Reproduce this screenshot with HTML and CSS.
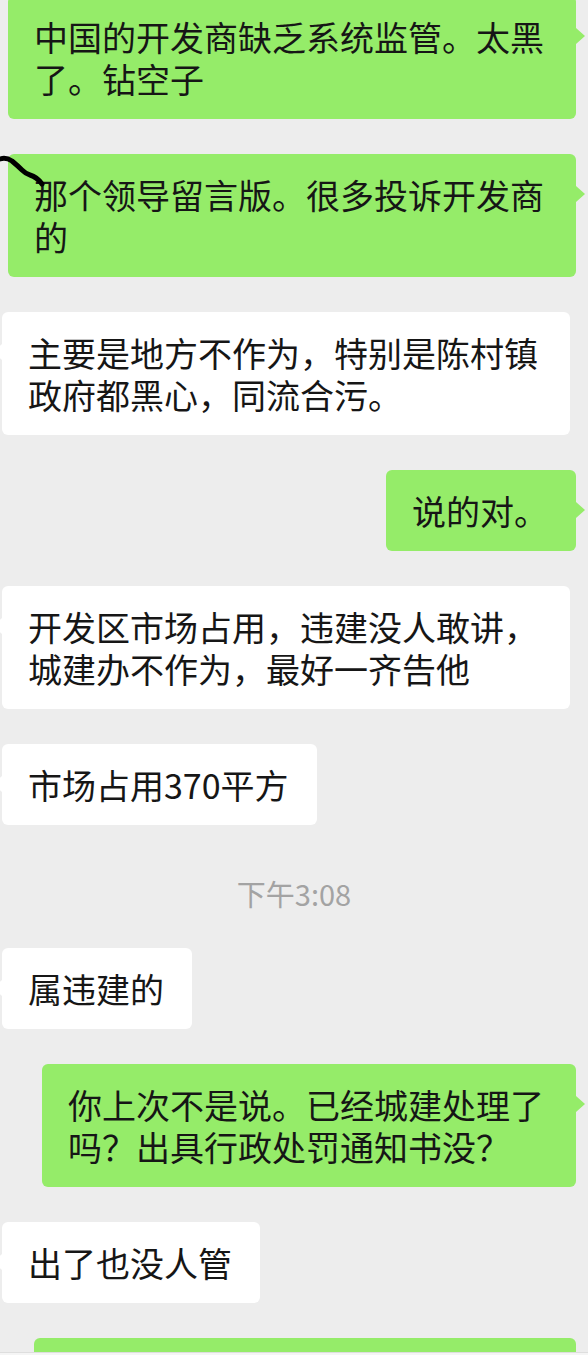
FILE: index.html
```html
<!DOCTYPE html>
<html>
<head>
    <meta charset="utf-8">
    <title>聊天记录</title>
    <link rel="stylesheet" href="styles.css">
</head>
<body>

    <div class="chat">
        <svg class="scribble" width="50" height="200" viewBox="0 0 50 200">
            <path d="M0 159 Q6 157 12 161 Q18 166 22 170 Q26 174 30 175 Q37 177 42 184" />
        </svg>

        <div class="row row-me first">
            <div class="bubble bubble-me">中国的开发商缺乏系统监管。太黑了。钻空子</div>
        </div>

        <div class="row row-me">
            <div class="bubble bubble-me">那个领导留言版。很多投诉开发商的</div>
        </div>

        <div class="row row-other">
            <div class="bubble bubble-other">主要是地方不作为，特别是陈村镇政府都黑心，同流合污。</div>
        </div>

        <div class="row row-me">
            <div class="bubble bubble-me">说的对。</div>
        </div>

        <div class="row row-other">
            <div class="bubble bubble-other">开发区市场占用，违建没人敢讲，城建办不作为，最好一齐告他</div>
        </div>

        <div class="row row-other">
            <div class="bubble bubble-other">市场占用370平方</div>
        </div>

        <div class="time">下午3:08</div>

        <div class="row row-other">
            <div class="bubble bubble-other">属违建的</div>
        </div>

        <div class="row row-me">
            <div class="bubble bubble-me bubble-narrow">你上次不是说。已经城建处理了吗？出具行政处罚通知书没？</div>
        </div>

        <div class="row row-other">
            <div class="bubble bubble-other">出了也没人管</div>
        </div>

        <!-- next message, scrolled below the edge -->
        <div class="row row-me">
            <div class="bubble bubble-me bubble-cut"></div>
        </div>
    </div>

    <div class="input-bar"></div>

</body>
</html>
```

FILE: styles.css
```css
body {
    margin: 0;
    background-color: #ededed;
    font-family: "Noto Sans CJK SC", "Noto Sans", sans-serif;
    overflow: hidden;
}

.chat {
    position: relative;
    height: 1352px;
    overflow: hidden;
    display: flex;
    flex-direction: column;
    gap: 35px;
}

.scribble {
    position: absolute;
    top: 0;
    left: 0;
    z-index: 2;
}

.scribble path {
    fill: none;
    stroke: #000;
    stroke-width: 5;
    stroke-linecap: round;
    stroke-linejoin: round;
}

.row {
    display: flex;
}

.row.first {
    margin-top: -4px;
}

.row-me {
    justify-content: flex-end;
    padding-right: 12px;
}

.row-other {
    justify-content: flex-start;
    padding-left: 2px;
}

.bubble {
    position: relative;
    box-sizing: border-box;
    max-width: 568px;
    padding: 20px 28px 19px 26px;
    border-radius: 6px;
    font-size: 34px;
    line-height: 42px;
    color: #161616;
}

.bubble::after {
    content: "";
    position: absolute;
    top: 32px;
    border-top: 8px solid transparent;
    border-bottom: 8px solid transparent;
}

.bubble-me {
    background-color: #95ec69;
}

.bubble-me::after {
    right: -9px;
    border-left: 9px solid #95ec69;
}

.bubble-other {
    background-color: #ffffff;
}

.bubble-other::after {
    left: -9px;
    border-right: 9px solid #ffffff;
}

.bubble-narrow {
    max-width: 534px;
}

.bubble-cut {
    width: 542px;
    min-height: 81px;
    flex-shrink: 0;
}

.time {
    margin: 18px 0 5px;
    text-align: center;
    font-size: 29px;
    line-height: 30px;
    color: #a3a3a3;
}

.input-bar {
    height: 2px;
    background-color: #f5f5f5;
    border-top: 1px solid #dedede;
}
```
